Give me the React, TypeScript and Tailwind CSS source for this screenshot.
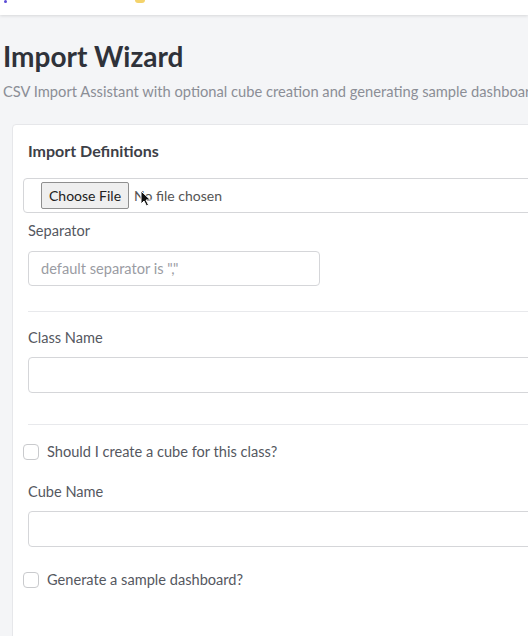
import React from "react";

export default function App() {
  const font = { fontFamily: "Lato, 'Noto Sans', sans-serif" };
  return (
    <div className="w-[528px] h-[636px] overflow-hidden bg-[#f4f5f7] text-[#3d4047]" style={font}>
      <div className="h-[15px] bg-white shadow-[0_1px_3px_rgba(0,0,0,0.12)] flex items-end gap-2 px-1">
        <span className="block w-[3px] h-[3px] rounded-full bg-[#5b4bd6] mb-[12px] ml-[0px]" />
        <span className="block w-[10px] h-[3px] rounded-b-full bg-[#f4d36b] ml-[120px] mb-[12px]" />
      </div>
      <div className="pl-[3px] pt-[24px]">
        <h1 className="text-[28px] font-bold leading-[34px] text-[#2f323a]">Import Wizard</h1>
        <p className="mt-[9px] text-[14.7px] leading-[18px] text-[#8b8e96] whitespace-nowrap">
          CSV Import Assistant with optional cube creation and generating sample dashboard
        </p>
      </div>
      <div className="ml-[12px] mt-[24px] w-[560px] h-[600px] bg-white border border-[#e6e7ea] rounded-[4px] pl-[10px] pt-[16px] text-[14.6px]">
        <h2 className="ml-[5px] text-[16px] font-bold leading-[20px] text-[#3d4047]">Import Definitions</h2>
        <div className="mt-[17px] h-[35px] border border-[#d5d6d9] rounded-[4px] flex items-center pl-[17px] text-[14px]">
          <span className="relative h-[27px] px-[7px] flex items-center border border-[#8f8f8f] rounded-[2px] bg-[#efefef] text-[#222]">Choose File</span>
          <span className="ml-[5px] text-[#555] relative">
            No file chosen
            <svg className="absolute left-[6px] top-[5px]" width="12" height="17" viewBox="0 0 12 17">
              <path d="M1 1 L1 14 L4 11 L6.5 16 L8.5 15 L6 10 L10.5 10 Z" fill="#111" stroke="#fff" strokeWidth="1" />
            </svg>
          </span>
        </div>
        <div className="ml-[5px]">
          <label className="block mt-[8px] leading-[20px] text-[#55585f]">Separator</label>
          <div className="mt-[10px] w-[292px] h-[35px] border border-[#d5d6d9] rounded-[4px] flex items-center px-[12px] text-[#9a9ca3]">default separator is ","</div>
          <div className="mt-[25px] h-px bg-[#e8e9ec]" />
          <label className="block mt-[16px] leading-[20px] text-[#55585f]">Class Name</label>
          <div className="mt-[9px] h-[36px] border border-[#d5d6d9] rounded-[4px]" />
          <div className="mt-[31px] h-px bg-[#e8e9ec]" />
        </div>
        <div className="mt-[16px] flex items-center gap-[8px] text-[#55585f]">
          <span className="block w-[16px] h-[16px] border border-[#c9cacd] rounded-[4px] bg-white" />
          <span>Should I create a cube for this class?</span>
        </div>
        <div className="ml-[5px]">
          <label className="block mt-[19px] leading-[20px] text-[#55585f]">Cube Name</label>
          <div className="mt-[9px] h-[36px] border border-[#d5d6d9] rounded-[4px]" />
        </div>
        <div className="mt-[22px] flex items-center gap-[8px] text-[#55585f]">
          <span className="block w-[16px] h-[16px] border border-[#c9cacd] rounded-[4px] bg-white" />
          <span>Generate a sample dashboard?</span>
        </div>
      </div>
    </div>
  );
}
